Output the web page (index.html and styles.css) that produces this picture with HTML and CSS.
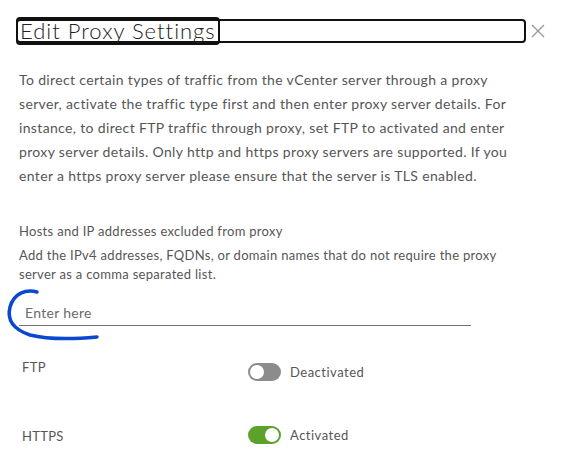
FILE: index.html
```html
<!DOCTYPE html>
<html>
<head>
<meta charset="utf-8">
<link rel="stylesheet" href="styles.css">
</head>
<body>
<div class="modal">
  <div class="header">
    <div class="title-box"><h3 class="title">Edit Proxy Settings</h3></div>
    <span class="close">
      <svg width="14" height="14" viewBox="0 0 14 14"><path d="M1 1 L13 13 M13 1 L1 13" stroke="#9a9a9a" stroke-width="1.4" fill="none"/></svg>
    </span>
  </div>
  <p class="intro">To direct certain types of traffic from the vCenter server through a proxy server, activate the traffic type first and then enter proxy server details. For instance, to direct FTP traffic through proxy, set FTP to activated and enter proxy server details. Only http and https proxy servers are supported. If you enter a https proxy server please ensure that the server is TLS enabled.</p>
  <div class="field">
    <div class="field-label">Hosts and IP addresses excluded from proxy</div>
    <div class="field-help">Add the IPv4 addresses, FQDNs, or domain names that do not require the proxy server as a comma separated list.</div>
    <div class="input">Enter here</div>
  </div>
  <div class="row row-ftp">
    <div class="row-label">FTP</div>
    <div class="toggle-wrap"><span class="toggle off"><span class="knob"></span></span><span class="toggle-text">Deactivated</span></div>
  </div>
  <div class="row row-https">
    <div class="row-label">HTTPS</div>
    <div class="toggle-wrap"><span class="toggle on"><span class="knob"></span></span><span class="toggle-text">Activated</span></div>
  </div>
  <svg class="scribble" width="130" height="60" viewBox="0 0 130 60"><path d="M37 7 C26 4 14 8 10 22 C7 34 12 44 30 50 C50 55 75 54 97 52" stroke="#0b47cf" stroke-width="3.5" fill="none" stroke-linecap="round"/></svg>
</div>
</body>
</html>
```
FILE: styles.css
```css
html, body {
  margin: 0;
  padding: 0;
  background: #ffffff;
}
body {
  font-family: Lato, "Noto Sans", sans-serif;
  color: #565656;
  width: 563px;
  height: 453px;
  overflow: hidden;
}
.modal {
  position: relative;
  padding: 19px 0 0 16px;
}
.header {
  display: flex;
  align-items: center;
}
.title-box {
  width: 506px;
  height: 20px;
  border: 2px solid #111;
  border-radius: 4px;
  display: flex;
  align-items: center;
}
.title {
  margin: -3px 0 -3px -2px;
  height: 24px;
  padding: 0 2px;
  border: 2px solid #111;
  border-radius: 4px;
  font-weight: 300;
  font-size: 22px;
  line-height: 24px;
  color: #222;
  letter-spacing: 1px;
}
.close {
  margin-left: 5px;
  display: flex;
}
.intro {
  margin: 25px 0 0 3px;
  width: 506px;
  font-size: 14px;
  line-height: 24px;
  letter-spacing: 0.35px;
}
.field {
  margin: 33px 0 0 3px;
  font-size: 13px;
  letter-spacing: 0.3px;
}
.field-label {
  line-height: 20px;
}
.field-help {
  margin-top: 5px;
  width: 490px;
  line-height: 19px;
}
.input {
  margin-top: 19px;
  width: 446px;
  padding: 0 0 2px 6px;
  line-height: 20px;
  font-size: 14px;
  border-bottom: 1px solid #737373;
  color: #6a6a6a;
}
.row {
  display: flex;
  margin-left: 6px;
  font-size: 13px;
  letter-spacing: 0.3px;
}
.row-label {
  width: 226px;
  line-height: 16px;
}
.row-ftp {
  margin-top: 33px;
}
.row-https {
  margin-top: 47px;
}
.toggle-wrap {
  display: flex;
  align-items: center;
  gap: 9px;
}
.row-ftp .toggle-wrap {
  margin-top: -5px;
  padding-top: 9px;
}
.row-https .toggle-wrap {
  margin-top: -11px;
  padding-top: 9px;
}
.toggle {
  width: 33px;
  height: 18px;
  border-radius: 9px;
  display: flex;
  align-items: center;
  box-sizing: border-box;
  padding: 0 2px;
}
.toggle.off {
  background: #8c8c8c;
}
.toggle.on {
  background: #5ca12c;
  justify-content: flex-end;
}
.knob {
  width: 14px;
  height: 14px;
  border-radius: 50%;
  background: #fff;
}
.toggle-text {
  line-height: 16px;
  letter-spacing: 0.5px;
}
.scribble {
  position: absolute;
  left: 0;
  top: 285px;
}
```
